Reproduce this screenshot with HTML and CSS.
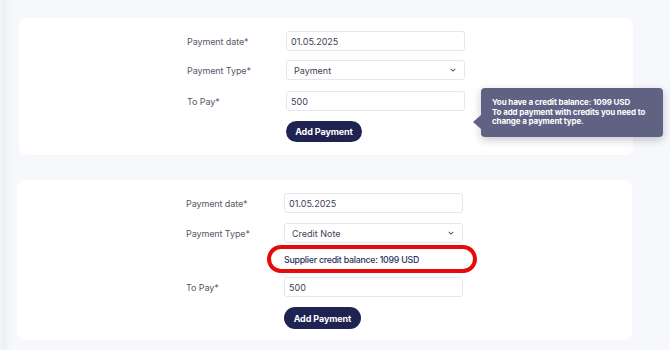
FILE: index.html
```html
<!DOCTYPE html>
<html>
<head>
<meta charset="utf-8">
<link rel="stylesheet" href="styles.css">
</head>
<body>
<section class="shot shot-top">
  <div class="card card-top">
    <div class="form">
      <div class="row"><label class="lbl">Payment date*</label><div class="field">01.05.2025</div></div>
      <div class="row gap-l"><label class="lbl">Payment Type*</label><div class="field select">Payment<svg class="chev" viewBox="0 0 8 5" width="6" height="4"><path d="M1 1l3 3 3-3" fill="none" stroke="#555a70" stroke-width="1.4"/></svg></div></div>
      <div class="row"><label class="lbl">To Pay*</label><div class="field">500</div></div>
      <div class="row"><span></span><button class="btn">Add Payment</button></div>
    </div>
    <div class="tooltip">
      <p>You have a credit balance: 1099 USD</p>
      <p>To add payment with credits you need to</p>
      <p>change a payment type.</p>
    </div>
  </div>
</section>
<section class="shot shot-bottom">
  <div class="card card-bottom">
    <div class="form">
      <div class="row"><label class="lbl">Payment date*</label><div class="field">01.05.2025</div></div>
      <div class="row"><label class="lbl">Payment Type*</label><div class="field select">Credit Note<svg class="chev" viewBox="0 0 8 5" width="6" height="4"><path d="M1 1l3 3 3-3" fill="none" stroke="#555a70" stroke-width="1.4"/></svg></div></div>
      <div class="row balance-row"><span></span><div class="balance">Supplier credit balance: 1099 USD<span class="ring"></span></div></div>
      <div class="row"><label class="lbl">To Pay*</label><div class="field">500</div></div>
      <div class="row"><span></span><button class="btn">Add Payment</button></div>
    </div>
  </div>
</section>
</body>
</html>
```

FILE: styles.css
```css
* { box-sizing: border-box; }
html, body { margin: 0; padding: 0; }
body {
  width: 670px;
  height: 350px;
  overflow: hidden;
  background: #f7f8fc;
  font-family: Inter, "Noto Sans", sans-serif;
  font-size: 9px;
  color: #3b3f55;
}
.shot {
  position: relative;
  background: linear-gradient(to right, #f3f4f8 0, #eceef3 4px, #f4f5f9 8px, #f7f8fc 12px);
}
.shot-top { height: 167px; padding: 18px 0 0 19px; }
.shot-bottom { height: 183px; padding: 13px 0 0 17px; }
.card {
  position: relative;
  background: #ffffff;
  border-radius: 8px;
}
.card-top { width: 614px; height: 137px; padding: 13px 0 0 168px; }
.card-bottom { width: 615px; height: 160px; padding: 13px 0 0 169px; }
.form { display: flex; flex-direction: column; gap: 10px; }
.card-top .form { gap: 9px; }
.card-top .row:nth-child(3) { margin-top: 2px; }
.card-top .row:nth-child(4) { margin-top: 1px; }
.row { display: grid; grid-template-columns: 99px 179px; align-items: center; min-height: 20px; }
.card-bottom .row { grid-template-columns: 98px 179px; }
.lbl { color: #555a6b; letter-spacing: -0.1px; }
.field {
  height: 20px;
  border: 1px solid #e6e7ee;
  border-radius: 3px;
  padding: 0 0 0 4px;
  display: flex;
  align-items: center;
  color: #3b3f55;
  background: #fff;
}
.select { padding-left: 7px; justify-content: space-between; padding-right: 8px; }
.chev { display: block; }
.btn {
  width: 76px;
  height: 21px;
  border: 0;
  border-radius: 11px;
  background: #1f2352;
  color: #fff;
  font-family: Inter, "Noto Sans", sans-serif;
  font-size: 9px;
  font-weight: 700;
  letter-spacing: -0.1px;
  padding: 0;
}
.card-bottom .btn { width: 77px; height: 22px; }
.tooltip {
  position: absolute;
  left: 462px;
  top: 70px;
  width: 182px;
  height: 49px;
  background: #5f6283;
  border-radius: 4px;
  color: #fff;
  font-size: 8px;
  font-weight: 700;
  letter-spacing: -0.12px;
  padding: 10px 0 0 11px;
  box-shadow: 0 3px 8px rgba(30, 34, 60, 0.25);
  line-height: 9.7px;
}
.tooltip p { margin: 0; white-space: nowrap; }
.tooltip::before {
  content: "";
  position: absolute;
  left: -8px;
  top: 27px;
  border-style: solid;
  border-width: 7px 8px 7px 0;
  border-color: transparent #5f6283 transparent transparent;
}
.balance-row { min-height: 0; }
.balance { position: relative; color: #2a2f5e; font-size: 8.8px; font-weight: 500; letter-spacing: -0.25px; white-space: nowrap; line-height: 14px; }
.ring {
  position: absolute;
  left: -17px;
  top: -8px;
  width: 210px;
  height: 28px;
  border: 4px solid #e60a0a;
  border-radius: 14px;
}
```
